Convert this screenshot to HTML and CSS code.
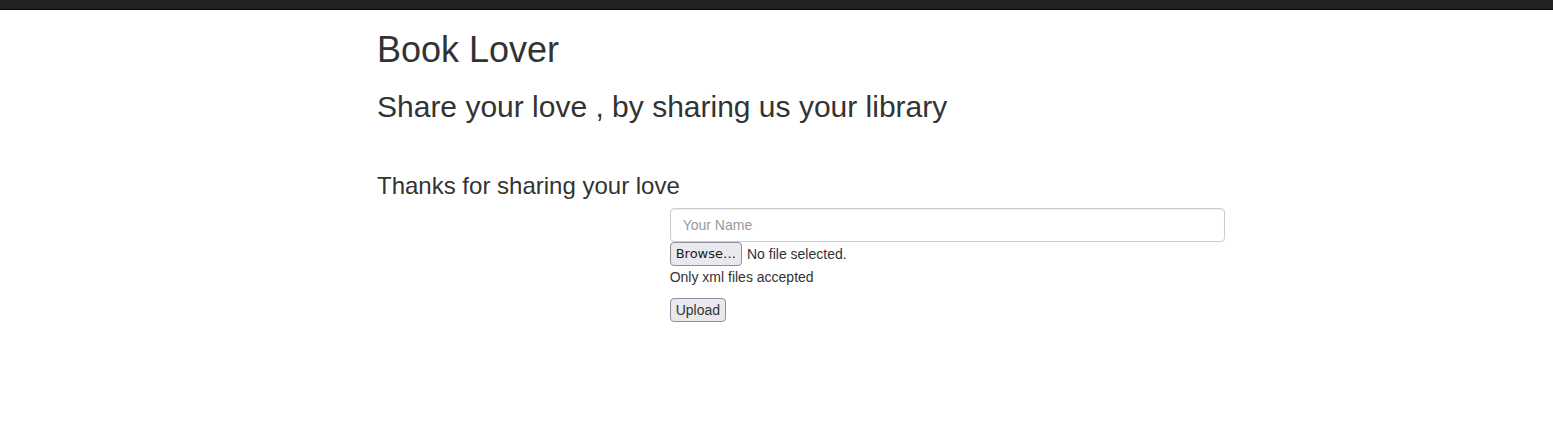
FILE: index.html
```html
<!DOCTYPE html>
<html lang="en">
<head>
<meta charset="utf-8">
<title>Book Lover</title>
<link rel="stylesheet" href="styles.css">
</head>
<body>
<nav class="navbar"></nav>
<main class="container">
  <h1 class="title">Book Lover</h1>
  <h2 class="subtitle">Share your love , by sharing us your library</h2>
  <h3 class="thanks">Thanks for sharing your love</h3>
  <form class="form-row">
    <div class="form-col">
      <input class="form-control" type="text" placeholder="Your Name">
      <div class="file-row">
        <button type="button" class="file-btn">Browse…</button>
        <span class="file-status">No file selected.</span>
      </div>
      <p class="help">Only xml files accepted</p>
      <button type="submit" class="upload-btn">Upload</button>
    </div>
  </form>
</main>
</body>
</html>
```
FILE: styles.css
```css
* { box-sizing: border-box; }
html, body { margin: 0; padding: 0; background: #fff; }
body {
  font-family: "Liberation Sans", Helvetica, Arial, sans-serif;
  font-size: 14px;
  line-height: 1.42857;
  color: #333;
}
.navbar {
  height: 10px;
  background: #222;
  border-bottom: 1px solid #080808;
}
.container {
  width: 848px;
  margin-left: 377px;
}
.title, .subtitle, .thanks {
  font-weight: 500;
  line-height: 1.1;
  margin: 20px 0 10px;
}
.title { font-size: 36px; }
.subtitle { font-size: 30px; }
.thanks { font-size: 24px; margin-top: 50px; margin-bottom: 9px; }
.form-row {
  display: grid;
  grid-template-columns: 1fr 2fr;
  margin: 0 -15px;
}
.form-col {
  grid-column: 2;
  padding: 0 15px;
}
.form-control {
  display: block;
  width: 100%;
  height: 34px;
  padding: 6px 12px;
  font-family: inherit;
  font-size: 14px;
  line-height: 1.42857;
  color: #555;
  background: #fff;
  border: 1px solid #ccc;
  border-radius: 4px;
  box-shadow: inset 0 1px 1px rgba(0,0,0,.075);
  margin: 0;
}
.form-control::placeholder { color: #999; }
.file-row {
  display: flex;
  align-items: center;
  gap: 5px;
  height: 24px;
}
.file-btn, .upload-btn {
  height: 24px;
  padding: 1px 5px;
  background: #e9e9ed;
  border: 1px solid #8f8f9d;
  border-radius: 4px;
  color: #1b1b1b;
  margin: 0;
}
.file-btn {
  font-family: "DejaVu Sans", sans-serif;
  font-size: 13px;
  line-height: 20px;
}
.upload-btn {
  display: block;
  font-family: inherit;
  font-size: 14px;
  line-height: 20px;
  color: #333;
}
.file-status { line-height: 20px; }
.help {
  margin: 2px 0 10px;
}
```
